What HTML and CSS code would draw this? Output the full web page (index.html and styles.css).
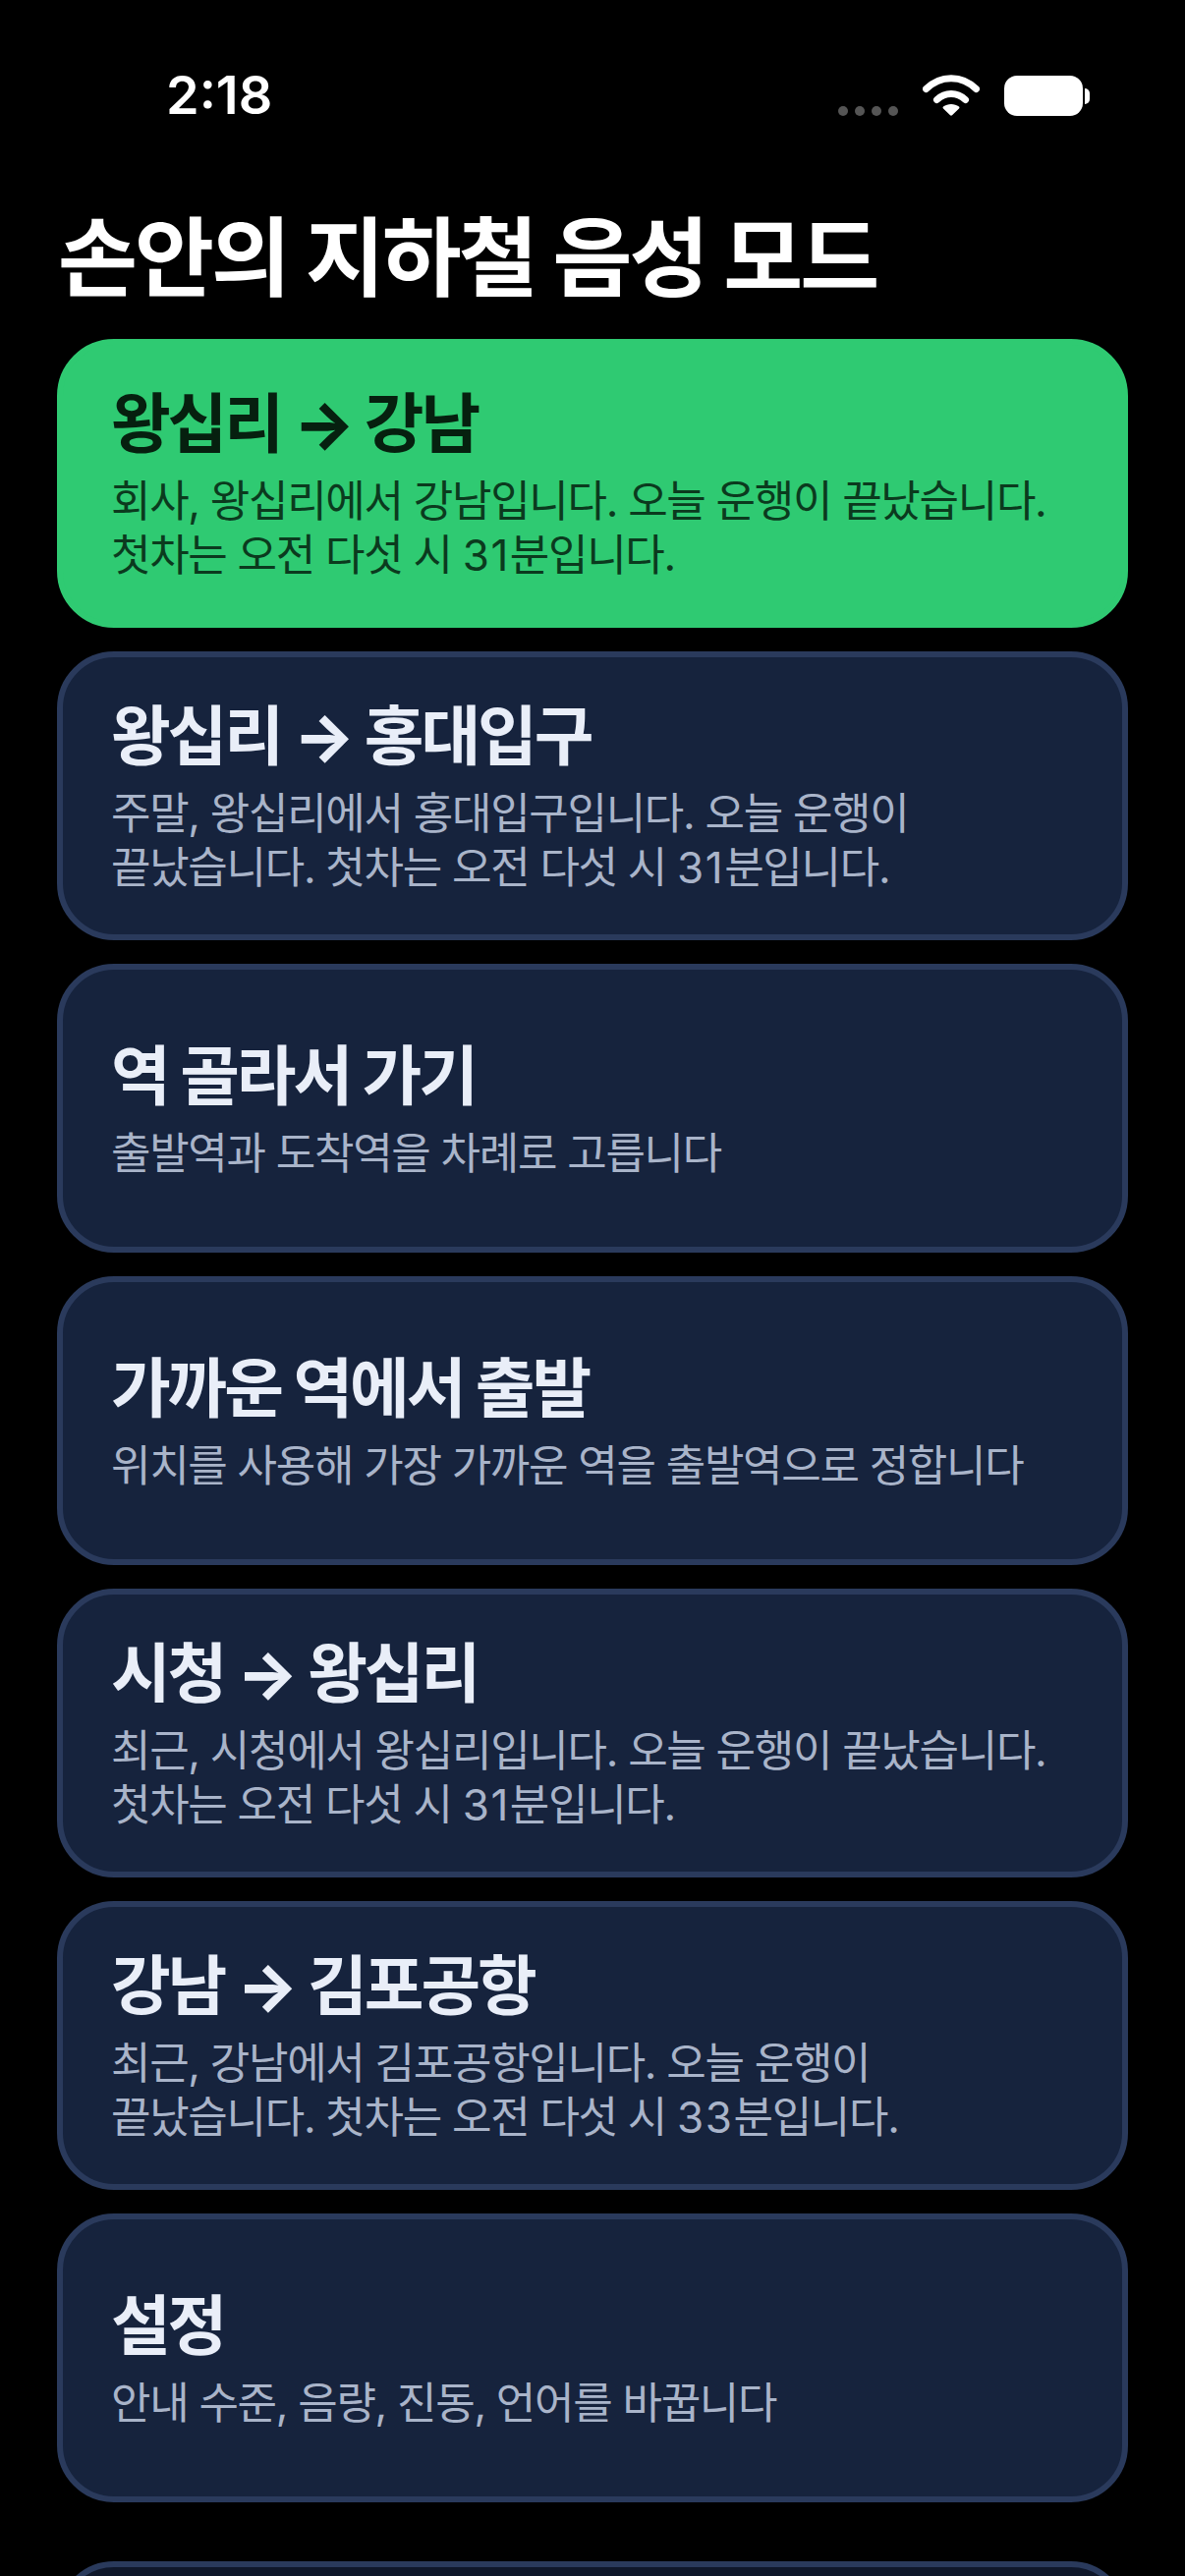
FILE: index.html
```html
<!DOCTYPE html>
<html lang="ko">
<head>
    <meta charset="UTF-8">
    <meta name="viewport" content="width=device-width, initial-scale=1.0">
    <title>손안의 지하철 음성 모드</title>
    <link rel="stylesheet" href="styles.css">
</head>
<body>

<div class="status-bar">
    <span class="time">2:18</span>
    <div class="status-icons">
        <div class="signal-dots"><i></i><i></i><i></i><i></i></div>
        <svg class="wifi" width="58" height="42" viewBox="0 0 58 42">
            <path d="M3.5 14.5C18 0 40 0 54.5 14.5" fill="none" stroke="#fff" stroke-width="7" stroke-linecap="round"/>
            <path d="M14.5 25.5C23 17.5 35 17.5 43.5 25.5" fill="none" stroke="#fff" stroke-width="7" stroke-linecap="round"/>
            <path d="M21 32.5C25.5 29 32.5 29 37 32.5C37.6 33 37.6 33.8 37 34.4L30 41.2C29.4 41.8 28.6 41.8 28 41.2L21 34.4C20.4 33.8 20.4 33 21 32.5Z" fill="#fff"/>
        </svg>
        <div class="battery"><div class="battery-body"></div><div class="battery-cap"></div></div>
    </div>
</div>

<h1 class="page-title">손안의 지하철 음성 모드</h1>

<div class="menu">
    <div class="card card-primary">
        <div class="card-title">왕십리 <span class="arrow">→</span> 강남</div>
        <div class="card-desc">회사, 왕십리에서 강남입니다. 오늘 운행이 끝났습니다.<br>첫차는 오전 다섯 시 <span class="num">31</span>분입니다.</div>
    </div>
    <div class="card">
        <div class="card-title">왕십리 <span class="arrow">→</span> 홍대입구</div>
        <div class="card-desc">주말, 왕십리에서 홍대입구입니다. 오늘 운행이<br>끝났습니다. 첫차는 오전 다섯 시 <span class="num">31</span>분입니다.</div>
    </div>
    <div class="card">
        <div class="card-title">역 골라서 가기</div>
        <div class="card-desc">출발역과 도착역을 차례로 고릅니다</div>
    </div>
    <div class="card">
        <div class="card-title">가까운 역에서 출발</div>
        <div class="card-desc">위치를 사용해 가장 가까운 역을 출발역으로 정합니다</div>
    </div>
    <div class="card">
        <div class="card-title">시청 <span class="arrow">→</span> 왕십리</div>
        <div class="card-desc">최근, 시청에서 왕십리입니다. 오늘 운행이 끝났습니다.<br>첫차는 오전 다섯 시 <span class="num">31</span>분입니다.</div>
    </div>
    <div class="card">
        <div class="card-title">강남 <span class="arrow">→</span> 김포공항</div>
        <div class="card-desc">최근, 강남에서 김포공항입니다. 오늘 운행이<br>끝났습니다. 첫차는 오전 다섯 시 <span class="num">33</span>분입니다.</div>
    </div>
    <div class="card">
        <div class="card-title">설정</div>
        <div class="card-desc">안내 수준, 음량, 진동, 언어를 바꿉니다</div>
    </div>
    <div class="card card-dark"></div>
</div>

</body>
</html>
```

FILE: styles.css
```css
html, body {
    margin: 0;
    height: 2622px;
    overflow: hidden;
    background-color: #000;
}
body {
    display: flex;
    flex-direction: column;
    font-family: Inter, "Noto Sans CJK KR", sans-serif;
    color: #fff;
}
.status-bar {
    height: 134px;
    flex-shrink: 0;
    box-sizing: border-box;
    padding: 70px 97px 0 169px;
    display: flex;
    justify-content: space-between;
    align-items: flex-start;
}
.time {
    font-size: 54px;
    font-weight: 600;
    line-height: 54px;
}
.status-icons {
    display: flex;
    align-items: flex-end;
    padding-top: 6px;
}
.signal-dots {
    display: flex;
    gap: 7px;
    margin-right: 25px;
}
.signal-dots i {
    width: 10px;
    height: 10px;
    border-radius: 50%;
    background-color: #555;
}
.wifi {
    display: block;
    margin-right: 25px;
}
.battery {
    display: flex;
    align-items: center;
}
.battery-body {
    width: 80px;
    height: 41px;
    border-radius: 13px;
    background-color: #fff;
}
.battery-cap {
    width: 5px;
    height: 16px;
    margin-left: 2px;
    border-radius: 0 8px 8px 0;
    background-color: #fff;
}
.page-title {
    margin: 0;
    padding: 65px 0 0 59px;
    height: 211px;
    flex-shrink: 0;
    box-sizing: border-box;
    font-size: 88px;
    font-weight: 700;
    line-height: 126px;
    letter-spacing: -3px;
}
.menu {
    flex: 1;
    min-height: 0;
    overflow: hidden;
    display: flex;
    flex-direction: column;
    gap: 24px;
    padding: 0 58px;
}
.card {
    height: 294px;
    flex-shrink: 0;
    box-sizing: border-box;
    padding: 0 49px;
    display: flex;
    flex-direction: column;
    justify-content: center;
    background-color: #16233d;
    border: 6px solid #2a3a5c;
    border-radius: 58px;
}
.card-primary {
    background-color: #2fca72;
    border-color: #2fca72;
}
.card-dark {
    margin-top: 36px;
    background-color: #0f172a;
}
.card-title {
    font-size: 66px;
    font-weight: 700;
    line-height: 80px;
    letter-spacing: -3.1px;
    margin-bottom: 12px;
    color: #e9eef8;
}
.arrow {
    font-weight: 800;
}
.card-desc {
    font-size: 44px;
    line-height: 55px;
    letter-spacing: -1.3px;
    color: #a9b4c9;
}
.num {
    letter-spacing: 1.5px;
}
.card-primary .card-title {
    color: #06200f;
}
.card-primary .card-desc {
    color: #0b3a1e;
}
```
